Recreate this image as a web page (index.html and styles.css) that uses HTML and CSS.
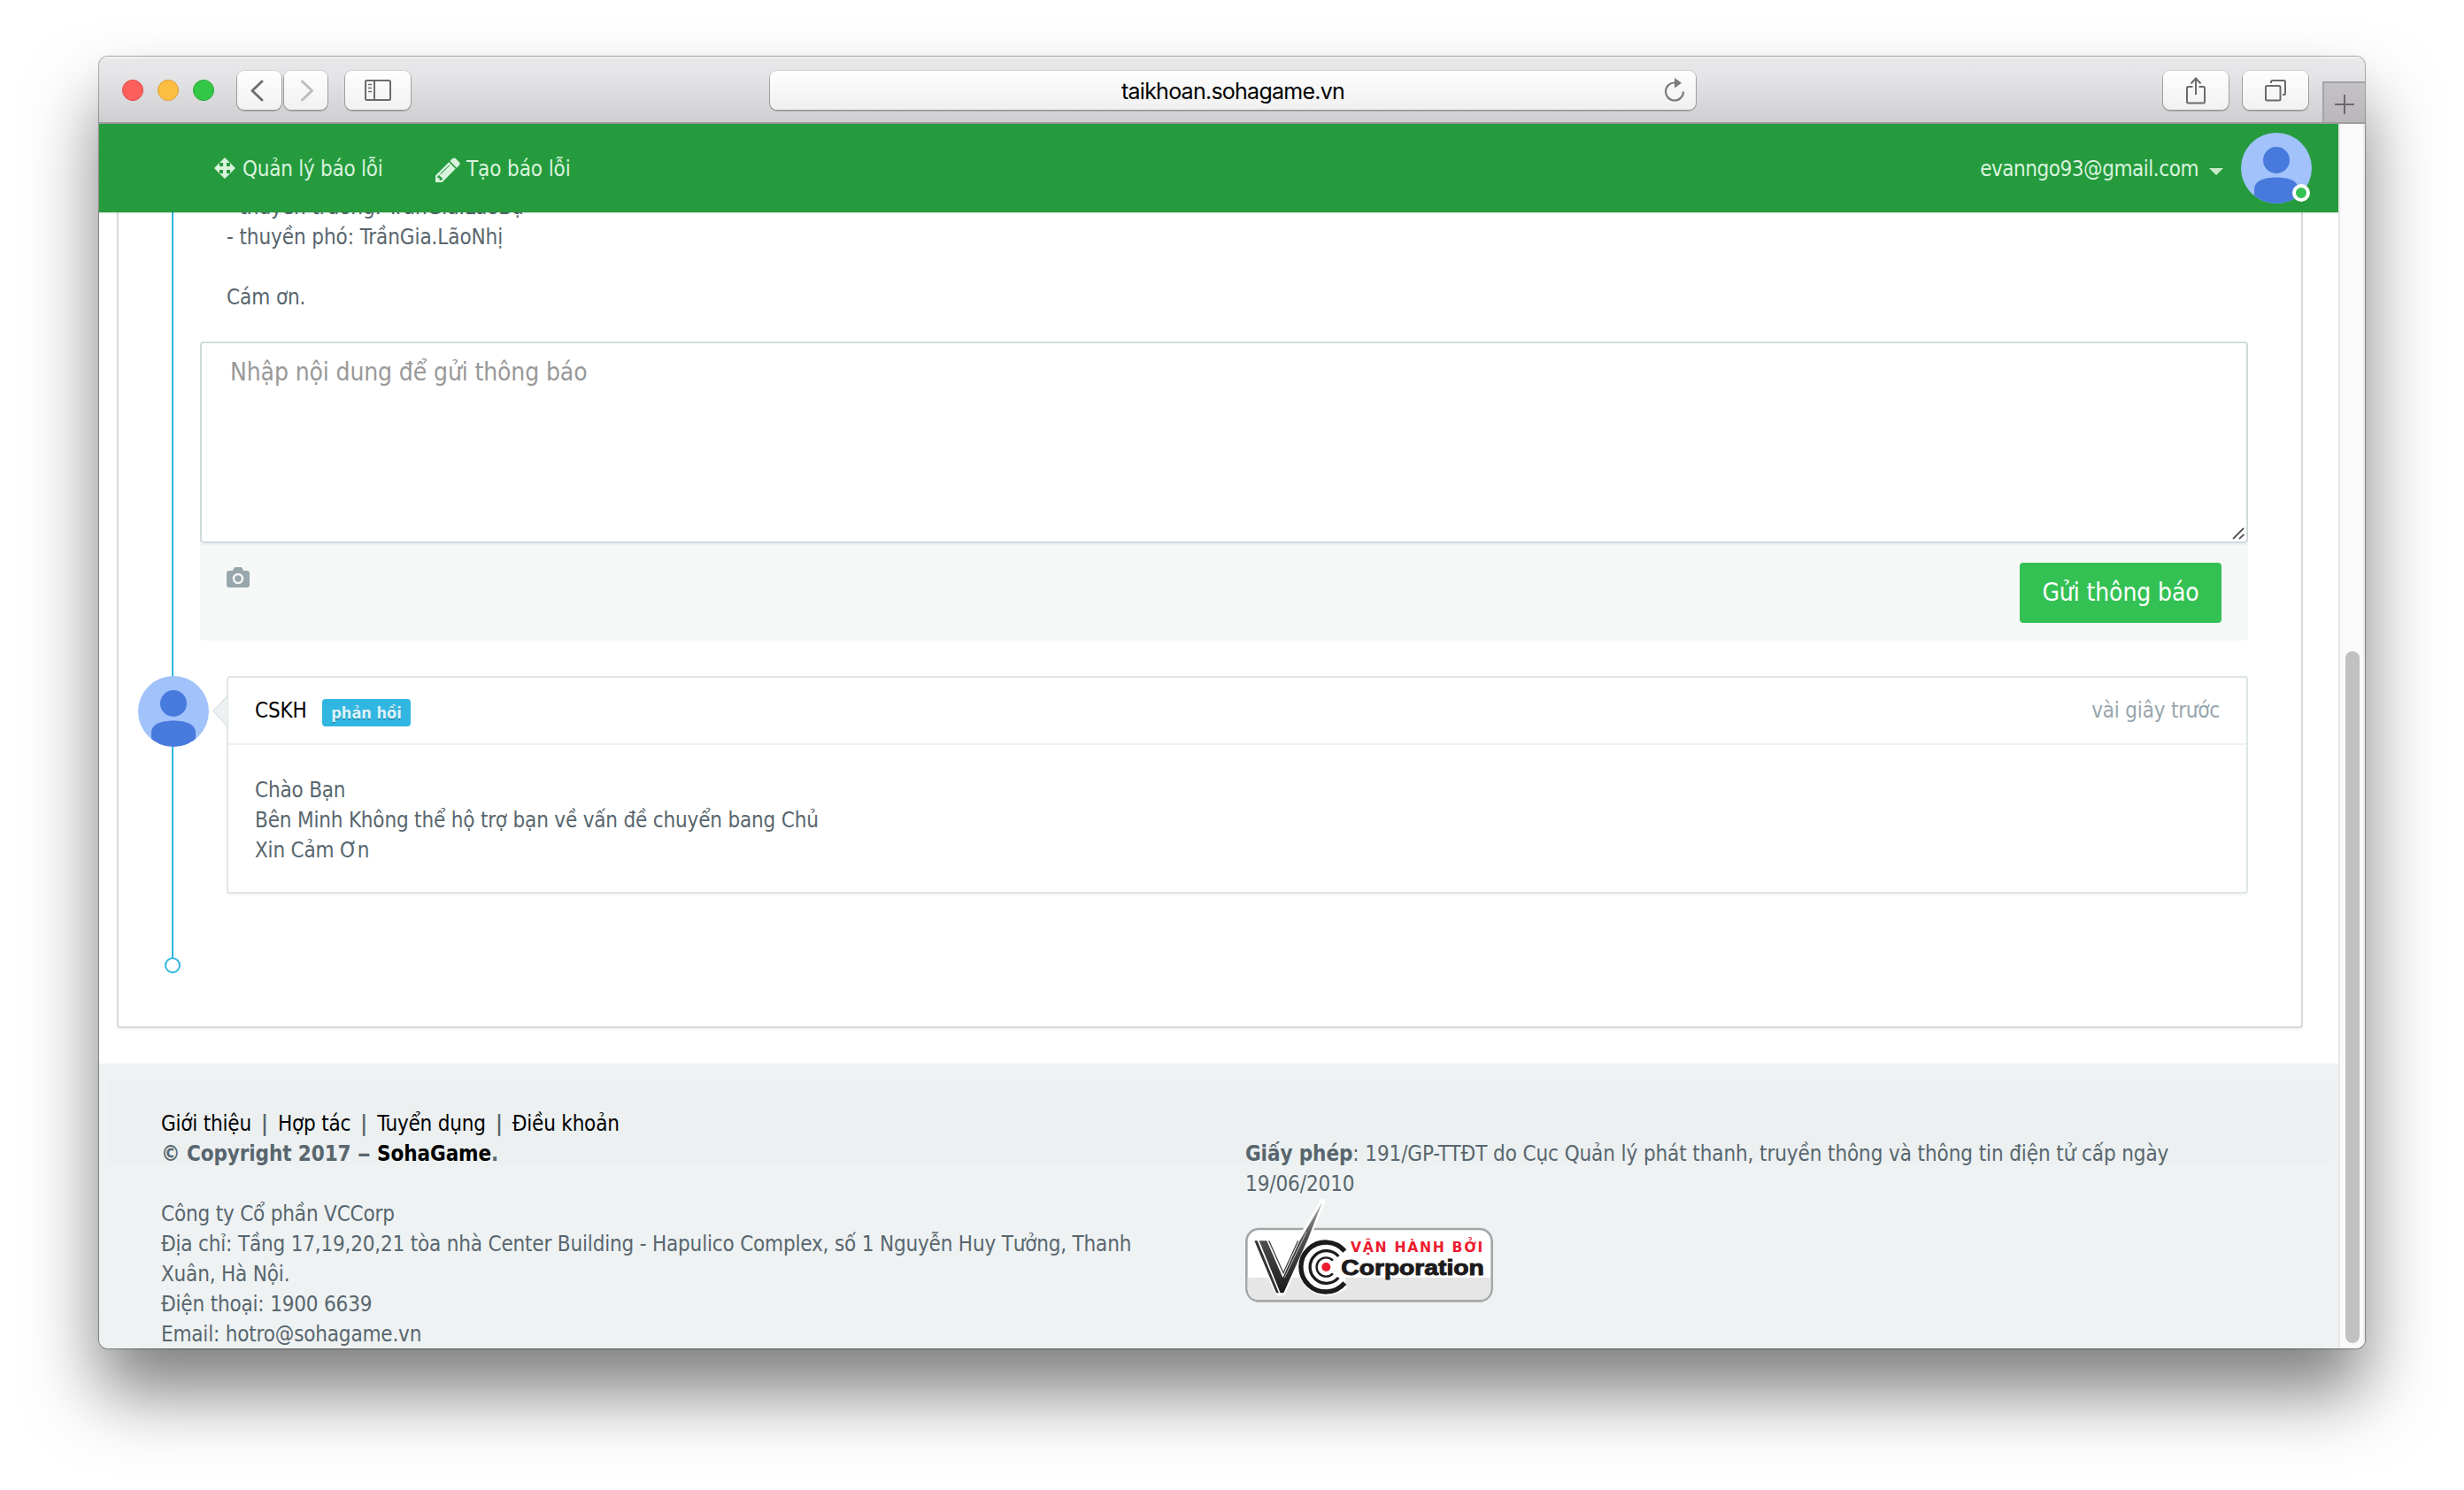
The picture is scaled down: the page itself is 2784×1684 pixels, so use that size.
FILE: index.html
```html
<!DOCTYPE html>
<html lang="vi">
<head>
<meta charset="utf-8">
<title>taikhoan.sohagame.vn</title>
<link rel="stylesheet" href="styles.css">
</head>
<body>
<svg class="defs" width="0" height="0" aria-hidden="true">
  <symbol id="avatar" viewBox="0 0 80 80">
    <clipPath id="disc"><circle cx="40" cy="40" r="40"/></clipPath>
    <g clip-path="url(#disc)">
      <rect width="80" height="80" fill="#a1c2fa"/>
      <circle cx="40" cy="31" r="15" fill="#4879dd"/>
      <path d="M15 64C15 54 27 50.5 40 50.5S65 54 65 64V80H15Z" fill="#4879dd"/>
    </g>
  </symbol>
</svg>
<div class="window">
  <header class="titlebar">
    <div class="lights"><i class="light red"></i><i class="light yellow"></i><i class="light green"></i></div>
    <div class="history">
      <button class="tool back"><svg width="51" height="44" viewBox="0 0 51 44"><path d="M29 12L18 22.5L29 33" fill="none" stroke="#6f6f6f" stroke-width="3" stroke-linecap="round" stroke-linejoin="round"/></svg></button>
      <button class="tool forward"><svg width="50" height="44" viewBox="0 0 50 44"><path d="M20.500 12L31.500 22.500L20.500 33" fill="none" stroke="#bdbdbd" stroke-width="3" stroke-linecap="round" stroke-linejoin="round"/></svg></button>
    </div>
    <button class="tool sidebar"><svg width="32" height="26" viewBox="0 0 32 26" fill="none" stroke="#6b6b6b" stroke-width="2"><rect x="2" y="2" width="28" height="22" rx="1.500"/><path d="M12 2V24"/><path d="M5 6.500H9M5 10.500H9M5 14.500H9" stroke-width="1.600"/></svg></button>
    <div class="address"><span class="url">taikhoan.sohagame.vn</span>
      <svg class="reload" width="24" height="28" viewBox="0 0 24 28"><path d="M12.500 5.500A10 10 0 1 0 22 15.500" fill="none" stroke="#7b7b7b" stroke-width="2.200"/><path d="M12 0L20 5.700L12 11.500Z" fill="#7b7b7b"/></svg>
    </div>
    <div class="actions">
      <button class="tool share"><svg width="26" height="32" viewBox="0 0 26 32" fill="none" stroke="#6b6b6b" stroke-width="2"><path d="M9.500 12H4.500Q3 12 3 13.500V29Q3 30.500 4.500 30.500H21.500Q23 30.500 23 29V13.500Q23 12 21.500 12H16.500"/><path d="M13 21V3M7.500 8.500L13 2.500L18.500 8.500"/></svg></button>
      <button class="tool tabs"><svg width="26" height="26" viewBox="0 0 26 26" fill="none" stroke="#6b6b6b" stroke-width="2"><rect x="2" y="8" width="16.500" height="16.500" rx="1.500"/><path d="M8 5V3.500Q8 2 9.500 2H22.500Q24 2 24 3.500V16.500Q24 18 22.500 18H21"/></svg></button>
    </div>
    <button class="newtab"><svg width="22" height="22" viewBox="0 0 22 22"><path d="M11 0V22M0 11H22" stroke="#6a686b" stroke-width="2"/></svg></button>
  </header>

  <div class="viewport">
    <div class="page">
      <nav class="nav">
        <a class="navlink manage"><svg width="24" height="24" viewBox="0 0 24 24"><path fill="#d9f3dd" fill-rule="evenodd" d="M12 0L24 12L12 24L0 12ZM6 6V10H10V6ZM14 6V10H18V6ZM6 14V18H10V14ZM14 14V18H18V14Z"/></svg><span>Quản lý báo lỗi</span></a>
        <a class="navlink create"><svg width="28" height="28" viewBox="128 128 1536 1536"><path fill="#d9f3dd" d="M491 1536l91-91-235-235-91 91v107h128v128h107zm523-928q0-22-22-22-10 0-17 7l-542 542q-7 7-7 17 0 22 22 22 10 0 17-7l542-542q7-7 7-17zm-54-192l416 416-832 832h-416v-416zm683 96q0 53-37 90l-166 166-416-416 166-165q36-38 90-38 53 0 91 38l235 234q37 39 37 91z"/></svg><span>Tạo báo lỗi</span></a>
        <a class="account"><span class="email">evanngo93@gmail.com</span><i class="caret"></i>
          <span class="me"><svg width="80" height="80"><use href="#avatar"/></svg><i class="status"></i></span></a>
      </nav>

      <main class="main">
        <section class="panel">
          <p class="post">- thuyền trưởng: TrầnGia.LãoBự<br>- thuyền phó: TrầnGia.LãoNhị<br><br>Cám ơn.</p>
          <form class="composer">
            <div class="field"><span class="placeholder">Nhập nội dung để gửi thông báo</span>
              <svg class="grip" width="14" height="14" viewBox="0 0 14 14"><path d="M1 13L13 1M8 13L13.500 8" stroke="#555" stroke-width="1.800"/></svg></div>
            <div class="composer-bar">
              <svg class="camera" width="26" height="23" viewBox="0 0 26 23"><path fill="#98a6ad" d="M8 1.500Q8.600 0 10 0H16Q17.400 0 18 1.500L19 4H23Q26 4 26 7V20Q26 23 23 23H3Q0 23 0 20V7Q0 4 3 4H7Z"/><circle cx="13" cy="13" r="5" fill="none" stroke="#f6f8f8" stroke-width="2.400"/></svg>
              <button class="send" type="button">Gửi thông báo</button>
            </div>
          </form>
          <article class="reply">
            <svg class="face" width="80" height="80"><use href="#avatar"/></svg>
            <div class="card">
              <svg class="pointer" width="17" height="36" viewBox="0 0 17 36"><path d="M17 0.500L1 17.500L17 35" fill="#edf1f2" stroke="#dee5e7" stroke-width="1.500"/></svg>
              <header class="card-head"><span class="author">CSKH</span><span class="badge">phản hồi</span><time class="time">vài giây trước</time></header>
              <p class="card-body">Chào Bạn<br>Bên Minh Không thể hộ trợ bạn về vấn đề chuyển bang Chủ<br>Xin Cảm Ơn</p>
            </div>
          </article>
          <i class="end"></i>
        </section>
      </main>

      <footer class="footer">
        <div class="footer-inner">
          <div class="company">
            <div class="links"><a>Giới thiệu</a><b>|</b><a>Hợp tác</a><b>|</b><a>Tuyển dụng</a><b>|</b><a>Điều khoản</a></div>
            <div class="copy">© Copyright 2017 <i class="dash">–</i> <span>SohaGame</span>.</div>
            <p class="info">Công ty Cổ phần VCCorp<br>Địa chỉ: Tầng 17,19,20,21 tòa nhà Center Building - Hapulico Complex, số 1 Nguyễn Huy Tưởng, Thanh<br>Xuân, Hà Nội.<br>Điện thoại: 1900 6639<br>Email: hotro@sohagame.vn</p>
          </div>
          <div class="license">
            <p><b>Giấy phép</b>: 191/GP-TTĐT do Cục Quản lý phát thanh, truyền thông và thông tin điện tử cấp ngày<br>19/06/2010</p>
            <svg class="vcc" width="280" height="118" viewBox="33 42 840 354">
              <defs><linearGradient id="tick" x1="0" y1="0" x2="0" y2="1"><stop offset="0" stop-color="#bbb"/><stop offset=".35" stop-color="#555"/><stop offset="1" stop-color="#1c1a1b"/></linearGradient></defs>
              <rect x="37" y="147" width="832" height="244" rx="42" fill="#fff" stroke="#a5a6a9" stroke-width="8"/>
              <path d="M41 312H865V350Q862 387 828 387H78Q44 387 41 350Z" fill="#e6e6e6"/>
              <g fill="#fff" stroke="#fff" stroke-width="18" stroke-linejoin="round"><path d="M64 187H117L163 290L216 187L295 54L240 187L160 364H143Z"/><path d="M374 215A89 89 0 1 0 372 338"/></g>
              <path d="M64 187H74L147 364H138Z" fill="#333"/>
              <path d="M80 187H106L160 312L216 190L295 54L246 180L163 364H152Z" fill="url(#tick)"/>
              <path d="M113 187L162 296L212 187" fill="none" stroke="#444" stroke-width="4"/>
              <path d="M166 312L240 158" fill="none" stroke="#fff" stroke-width="2"/>
              <g fill="none" stroke="#1c1a1b"><path d="M370 222A84 84 0 1 0 370 330" stroke-width="16"/><path d="M349 240A55 55 0 1 0 349 312" stroke-width="10"/><path d="M330 254A32 32 0 1 0 330 298" stroke-width="7"/></g>
              <circle cx="307" cy="276" r="15" fill="#ed1c2e"/>
              <text class="vcc-top" x="390" y="225" textLength="448" lengthAdjust="spacing">VẬN HÀNH BỞI</text>
              <text class="vcc-name" x="358" y="303" textLength="484" lengthAdjust="spacingAndGlyphs">Corporation</text>
            </svg>
          </div>
        </div>
      </footer>
    </div>
    <div class="scrollbar"><i class="thumb"></i></div>
  </div>
</div>
</body>
</html>
```
FILE: styles.css
```css
* { box-sizing: border-box; }
body {
  margin: 0; width: 2784px; height: 1684px; overflow: hidden; background: #fff;
  font: 24px/34px "DejaVu Sans Condensed", "Noto Sans", sans-serif; letter-spacing: -0.18px; color: #58666e;
}
p { margin: 0; }
svg { display: block; flex: none; }
button { margin: 0; padding: 0; border: 0; font: inherit; letter-spacing: inherit; }
.defs { position: absolute; }

.window {
  width: 2560px; height: 1460px; margin: 64px 0 0 112px; border-radius: 10px; overflow: hidden;
  display: flex; flex-direction: column; background: #fff;
  box-shadow: 0 0 1px 1px rgba(0,0,0,.33), 0 50px 80px rgba(0,0,0,.5);
}

/* Browser chrome */
.titlebar {
  flex: none; height: 76px; padding-left: 26px; display: flex; align-items: flex-start;
  border-bottom: 2px solid #9d9b9e;
  background: linear-gradient(#f4f4f5 0, #e8e7e9 3px, #e5e4e6 20px, #cfced0 74px);
}
.lights { display: flex; gap: 16px; padding-top: 26px; width: 130px; }
.light { width: 24px; height: 24px; border-radius: 50%; border: 1px solid; }
.red { background: #fd605c; border-color: #df4744; }
.yellow { background: #fdbd40; border-color: #de9f34; }
.green { background: #33c748; border-color: #27a935; }
.tool {
  margin-top: 16px; height: 44px; border-radius: 8px; display: flex; align-items: center; justify-content: center;
  background: linear-gradient(#fefefe, #f1f1f1);
  box-shadow: 0 0 0 1px rgba(0,0,0,.1), 0 1px 0 1px rgba(0,0,0,.2);
}
.history { display: flex; gap: 3px; width: 122px; }
.back { width: 50px; }
.forward { width: 49px; }
.back svg { margin-left: -2px; }
.sidebar { width: 74px; }
.address {
  margin: 16px 0 0 406px; width: 1046px; height: 44px; border-radius: 8px; padding-right: 12px;
  display: flex; align-items: center; background: linear-gradient(#fefefe, #f0f0f0);
  box-shadow: 0 0 0 1px rgba(0,0,0,.1), 0 1px 0 1px rgba(0,0,0,.2);
}
.reload { margin-top: -1px; }
.url { flex: 1; padding: 2px 0 0 36px; text-align: center; font: 25px/42px Inter, sans-serif; letter-spacing: -0.75px; color: #000; }
.actions { display: flex; gap: 16px; margin-left: 528px; }
.share, .tabs { width: 74px; }
.newtab {
  margin: 28px 0 0 auto; width: 48px; height: 46px; padding-top: 3px; display: flex; align-items: center; justify-content: center;
  border: solid #a5a3a6; border-width: 2px 0 0 2px; background: linear-gradient(#c4c2c5, #b9b7ba);
}

.viewport { flex: 1; display: flex; min-height: 0; }
.page { width: 2530px; display: flex; flex-direction: column; }
.scrollbar {
  flex: 1; padding: 596px 0 6px 6px; background: #fafafa; border-left: 2px solid #e8e8e8; border-right: 2px solid #ededed;
}
.thumb { display: block; width: 16px; height: 100%; border-radius: 8px; background: #c1c1c1; }

/* Site navigation */
.nav {
  position: relative; z-index: 1; flex: none; height: 100px; padding: 0 30px 0 130px; display: flex; align-items: center;
  background: #259b3e; color: #d9f3dd; box-shadow: 0 2px 2px rgba(0,0,0,.05), 0 1px 0 rgba(0,0,0,.05);
}
.navlink, .account { display: flex; align-items: center; }
.navlink span, .email { padding-top: 2px; }
.manage { width: 250px; gap: 8px; letter-spacing: -0.25px; }
.create { gap: 7px; letter-spacing: -0.1px; }
.create svg { margin-top: 3px; }
.account { margin-left: auto; }
.email { letter-spacing: -0.46px; margin-right: 12px; }
.caret { border: solid transparent; border-width: 8px 8px 0; border-top-color: #c5ebca; margin: 8px 20px 0 0; }
.me { position: relative; }
.status {
  position: absolute; right: 2px; bottom: 2px; width: 20px; height: 20px; border-radius: 50%;
  background: #34c154; border: 4px solid #fff;
}

/* Conversation */
.main { height: 962px; flex: none; overflow: hidden; }
.panel {
  position: relative; height: 922px; margin: 0 40px 0 20px; padding-right: 60px;
  border: solid #d9d9db; border-width: 0 2px 2px; border-radius: 0 0 4px 4px; box-shadow: 0 2px 2px rgba(0,0,0,.05);
  display: flex; flex-direction: column;
}
.panel::before { content: ""; position: absolute; left: 60px; top: 0; width: 2px; height: 842px; background: #2eb6e2; }
.post { margin: -23px 0 33px 122px; letter-spacing: -0.08px; }
.composer { margin-left: 92px; }
.field {
  position: relative; height: 228px; padding: 13px 32px; border: 2px solid #cfdadd; border-radius: 4px; background: #fff;
  font-size: 28px; line-height: 40px; color: #999; letter-spacing: -0.12px;
}
.grip { position: absolute; right: 2px; bottom: 2px; }
.composer-bar {
  height: 110px; padding: 22px 30px 0; display: flex; justify-content: space-between; align-items: flex-start;
  background: #f6f8f8; border-radius: 0 0 4px 4px; box-shadow: inset 0 2px #edf1f2;
}
.camera { margin-top: 5px; }
.send {
  width: 228px; height: 68px; border-radius: 4px; background: #34c154; color: #fff;
  font-size: 28px; letter-spacing: -0.1px;
}
.reply { display: flex; gap: 20px; margin: 40px 0 0 22px; }
.face { position: relative; }
.card { position: relative; flex: 1; height: 246px; border: 2px solid #dee5e7; border-radius: 4px; background: #fff; box-shadow: 0 2px 2px rgba(0,0,0,.04); }
.pointer { position: absolute; left: -18px; top: 20px; }
.card-head { display: flex; align-items: center; height: 76px; padding: 0 30px; border-bottom: 2px solid #edf1f2; }
.author { color: #000; width: 76px; }
.badge {
  width: 100px; height: 31px; margin-top: 4px; border-radius: 4px; text-align: center; background: #31b6e2; color: #dcf2f9;
  font-weight: bold; font-size: 18px; line-height: 31px; letter-spacing: 0; text-shadow: 0 2px 0 rgba(0,0,0,.2);
}
.time { margin-left: auto; color: #98a6ad; letter-spacing: -0.2px; }
.card-body { padding: 34px 30px 0; }
.end { width: 18px; height: 18px; margin: 72px 0 0 52px; border: 2px solid #2eb6e2; border-radius: 50%; background: #fff; }

/* Footer */
.footer { flex: 1; min-height: 0; padding: 20px 10px 0; background: #eef2f3; }
.footer-inner { height: 94px; padding-left: 60px; display: flex; align-items: flex-start; background: #ecf0f1; }
.company { width: 1225px; padding-top: 31px; }
.links { color: #000; display: flex; letter-spacing: -0.2px; }
.links b { color: #58666e; width: 30px; text-align: center; }
.copy { font-weight: bold; letter-spacing: -0.1px; }
.dash { display: inline-block; font-style: normal; transform: scaleX(1.4); margin: 0 2px; }
.copy span { color: #000; }
.info { margin-top: 34px; }
.license { padding-top: 65px; white-space: nowrap; letter-spacing: -0.1px; }
.vcc { margin-top: -1px; }
.vcc-top { font: bold 47px "DejaVu Sans", Verdana, sans-serif; fill: #ed1c2e; }
.vcc-name { font: bold 74px "Liberation Sans", Arial, sans-serif; fill: #1c1a1b; stroke: #1c1a1b; stroke-width: 3px; }
```
